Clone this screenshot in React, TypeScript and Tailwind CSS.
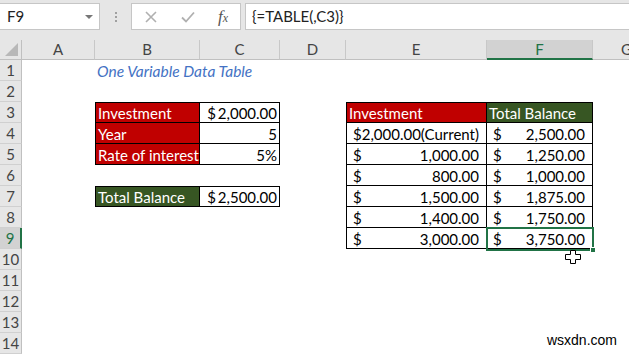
import type { ReactNode } from "react";

// Excel sheet: column widths in px (row header is 22px wide)
const COLS: { key: string; w: string }[] = [
  { key: "A", w: "w-[73px]" },
  { key: "B", w: "w-[105px]" },
  { key: "C", w: "w-[80px]" },
  { key: "D", w: "w-[66px]" },
  { key: "E", w: "w-[141px]" },
  { key: "F", w: "w-[106px]" },
  { key: "G", w: "w-[68px]" },
];

const ROWS = Array.from({ length: 14 }, (_, i) => i + 1);

const RED = "bg-[#c00000] text-white";
const GREEN = "bg-[#375623] text-white";

/** Accounting format: "$" on the left, number on the right */
function Acct({ value }: { value: string }) {
  return (
    <span className="flex w-full justify-between pl-[6px] pr-[7px]">
      <span>$</span>
      <span>{value}</span>
    </span>
  );
}

type CellSpec = { content?: ReactNode; cls?: string };

const cells: Record<string, CellSpec> = {
  B1: {
    content: (
      <span className="whitespace-nowrap pl-[2px] text-[15.5px] italic text-[#4472c4]">One Variable Data Table</span>
    ),
  },
  B3: { content: <span className="pl-[2px]">Investment</span>, cls: `${RED} border-l border-t border-r border-b` },
  C3: { content: <span className="ml-auto pr-[2px]">$&#8201;2,000.00</span>, cls: "border-t border-r border-b" },
  B4: { content: <span className="pl-[2px]">Year</span>, cls: `${RED} border-l border-r border-b` },
  C4: { content: <span className="ml-auto pr-[2px]">5</span>, cls: "border-r border-b" },
  B5: { content: <span className="whitespace-nowrap pl-[2px]">Rate of interest</span>, cls: `${RED} border-l border-r border-b` },
  C5: { content: <span className="ml-auto pr-[2px]">5%</span>, cls: "border-r border-b" },
  B7: { content: <span className="pl-[2px]">Total Balance</span>, cls: `${GREEN} border-l border-t border-r border-b` },
  C7: { content: <span className="ml-auto pr-[2px]">$&#8201;2,500.00</span>, cls: "border-t border-r border-b" },

  E3: { content: <span className="pl-[2px]">Investment</span>, cls: `${RED} border-l border-t border-r border-b` },
  F3: { content: <span className="whitespace-nowrap pl-[2px]">Total Balance</span>, cls: `${GREEN} border-t border-r border-b` },
  E4: { content: <span className="pl-[6px]">$2,000.00(Current)</span>, cls: "border-l border-r border-b" },
  F4: { content: <Acct value="2,500.00" />, cls: "border-r border-b" },
  E5: { content: <Acct value="1,000.00" />, cls: "border-l border-r border-b" },
  F5: { content: <Acct value="1,250.00" />, cls: "border-r border-b" },
  E6: { content: <Acct value="800.00" />, cls: "border-l border-r border-b" },
  F6: { content: <Acct value="1,000.00" />, cls: "border-r border-b" },
  E7: { content: <Acct value="1,500.00" />, cls: "border-l border-r border-b" },
  F7: { content: <Acct value="1,875.00" />, cls: "border-r border-b" },
  E8: { content: <Acct value="1,400.00" />, cls: "border-l border-r border-b" },
  F8: { content: <Acct value="1,750.00" />, cls: "border-r border-b" },
  E9: { content: <Acct value="3,000.00" />, cls: "border-l border-r border-b" },
  F9: { content: <Acct value="3,750.00" />, cls: "border-r border-b" },
};

function FormulaBar() {
  return (
    <div className="flex h-[40px] items-start bg-[#e6e6e6] pt-[3px]">
      {/* name box */}
      <div className="flex h-[27px] w-[100px] items-center justify-between border border-l-0 border-[#c6c6c6] bg-white pl-[7px] pr-[6px]">
        <span className="text-[15px] text-[#222]">F9</span>
        <span className="h-0 w-0 border-x-[4px] border-t-[4px] border-x-transparent border-t-[#777]" />
      </div>
      <div className="flex h-[27px] w-[31px] flex-col items-center justify-center gap-[2px]">
        <span className="h-[2px] w-[2px] bg-[#a0a0a0]" />
        <span className="h-[2px] w-[2px] bg-[#a0a0a0]" />
        <span className="h-[2px] w-[2px] bg-[#a0a0a0]" />
      </div>
      {/* cancel / enter / fx */}
      <div className="flex h-[27px] w-[110px] items-center border border-[#c6c6c6] bg-white">
        <svg width="14" height="14" viewBox="0 0 14 14" className="ml-[12px]">
          <path d="M2 2 L12 12 M12 2 L2 12" stroke="#b0b0b0" strokeWidth="1.6" fill="none" />
        </svg>
        <svg width="16" height="14" viewBox="0 0 16 14" className="ml-[22px]">
          <path d="M2 7.5 L6 11.5 L14 2.5" stroke="#b0b0b0" strokeWidth="1.8" fill="none" />
        </svg>
        <span className="ml-[22px] font-['Liberation_Serif',serif] text-[17px] italic text-[#555]">
          f<span className="text-[12px]">x</span>
        </span>
      </div>
      <div className="ml-[4px] flex h-[27px] flex-1 items-center border border-r-0 border-[#c6c6c6] bg-white pl-[6px]">
        <span className="text-[15px] text-[#222]">{"{=TABLE(,C3)}"}</span>
      </div>
    </div>
  );
}

function ColumnHeaders() {
  return (
    <div className="flex h-[20px] bg-[#e6e6e6]">
      <div className="flex h-full w-[22px] shrink-0 items-end justify-end border-r border-b border-[#c0c0c0] pb-[3px] pr-[3px]">
        <svg width="13" height="13" viewBox="0 0 13 13">
          <path d="M13 0 L13 13 L0 13 Z" fill="#b8b8b8" />
        </svg>
      </div>
      {COLS.map((c) => {
        const active = c.key === "F";
        return (
          <div
            key={c.key}
            className={`${c.w} flex shrink-0 items-center justify-center border-r border-[#c8c8c8] text-[15px] ${
              active
                ? "border-b-2 border-b-[#217346] bg-[#d2d2d2] text-[#217346]"
                : "border-b border-b-[#c0c0c0] text-[#444]"
            }`}
          >
            {c.key}
          </div>
        );
      })}
    </div>
  );
}

function SheetRow({ n }: { n: number }) {
  const active = n === 9;
  return (
    <div className="flex h-[21px]">
      <div
        className={`flex w-[22px] shrink-0 items-center justify-center border-b border-b-[#d0d0d0] pt-[1px] text-[15px] ${
          active
            ? "border-r-2 border-r-[#217346] bg-[#d2d2d2] text-[#217346]"
            : "border-r border-r-[#c0c0c0] bg-[#e6e6e6] text-[#444]"
        }`}
      >
        {n}
      </div>
      {COLS.map((c) => {
        const spec = cells[`${c.key}${n}`];
        return (
          <div
            key={c.key}
            className={`${c.w} flex shrink-0 items-center overflow-visible border-black pt-[2px] text-[15px] leading-none text-black ${
              spec?.cls ?? ""
            }`}
          >
            {spec?.content}
          </div>
        );
      })}
    </div>
  );
}

function Cursor() {
  return (
    <svg width="16" height="14" viewBox="0 0 16 14" className="absolute left-[565px] top-[250px]">
      <path
        d="M5.5 0.5 H10.5 V4.5 H15.5 V9.5 H10.5 V13.5 H5.5 V9.5 H0.5 V4.5 H5.5 Z"
        fill="white"
        stroke="black"
        strokeWidth="1"
      />
    </svg>
  );
}

export default function App() {
  return (
    <div className="relative h-[355px] w-[629px] overflow-hidden bg-white font-['Lato',sans-serif]">
      <FormulaBar />
      <ColumnHeaders />
      <div>
        {ROWS.map((n) => (
          <SheetRow key={n} n={n} />
        ))}
      </div>
      {/* selection on F9 */}
      <div className="pointer-events-none absolute left-[486px] top-[227px] h-[24px] w-[108px] border-2 border-[#217346]" />
      <div className="absolute left-[590px] top-[247px] h-[6px] w-[6px] border border-white bg-[#217346]" />
      <Cursor />
      <span className="absolute bottom-[4px] right-[12px] font-['Liberation_Sans',sans-serif] text-[14px] text-black">
        wsxdn.com
      </span>
    </div>
  );
}
